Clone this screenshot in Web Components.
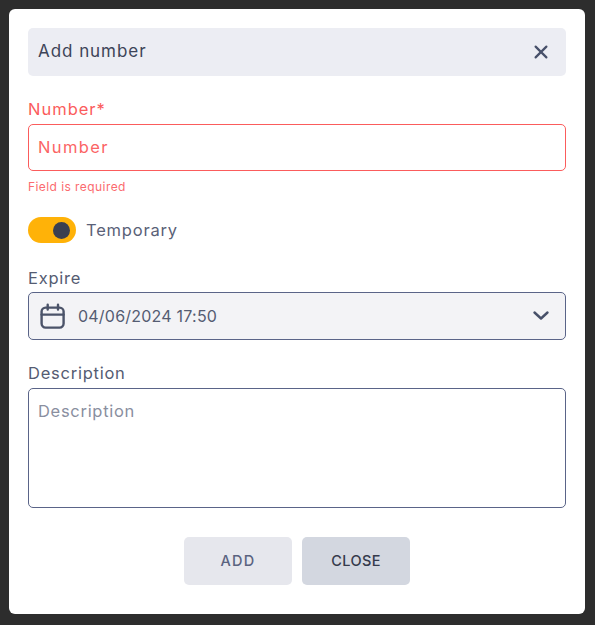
<!DOCTYPE html>
<html lang="en"><head><meta charset="utf-8"><title>Add number</title>
<style>
html,body{margin:0;height:625px;overflow:hidden;background:#2d2d2d}
body{padding:9px 10px 11px 9px;box-sizing:border-box;font-family:Inter,"Liberation Sans",sans-serif}
</style></head><body>
<add-number-dialog></add-number-dialog>
<template id="dlg"><style>
:host{display:flex;flex-direction:column;width:576px;height:605px;box-sizing:border-box;background:#fff;border-radius:6px;padding:19px 19px 29px}
.head{display:flex;align-items:center;justify-content:space-between;height:48px;background:#ecedf3;border-radius:5px;padding:0 16px 0 10px;box-sizing:border-box;color:#3d4458;font-size:17px;letter-spacing:.95px;flex:none}
.head span{padding-bottom:2px}
.head svg{display:block}
form-field.n{margin-top:23px}
.err{font-size:12px;line-height:16px;color:#fb6b6f;margin-top:8px;height:16px;letter-spacing:.43px}
toggle-row{margin-top:22px}
form-field.e{margin-top:25px;--gap:4px}
form-field.d{margin-top:23px}
.btns{display:flex;justify-content:center;gap:10px;margin-top:29px}
</style>
<div class="head"><span>Add number</span><svg width="18" height="18" viewBox="0 0 18 18" fill="none" stroke="#475069" stroke-width="2.2" stroke-linecap="round"><path d="M3.6 3.6 14.4 14.4M14.4 3.6 3.6 14.4"/></svg></div>
<form-field class="n" label="Number*" tone="error"><text-box tone="error" placeholder="Number"></text-box></form-field>
<div class="err">Field is required</div>
<toggle-row>Temporary</toggle-row>
<form-field class="e" label="Expire"><date-select>04/06/2024 17:50</date-select></form-field>
<form-field class="d" label="Description"><text-area placeholder="Description"></text-area></form-field>
<div class="btns"><action-button tone="light">ADD</action-button><action-button tone="dark">CLOSE</action-button></div>
</template>
<template id="field"><style>
:host{display:flex;flex-direction:column;gap:var(--gap,5px)}
label{font-size:16.5px;line-height:20px;height:20px;color:#555c72;letter-spacing:.75px}
:host([tone=error]) label{color:#fb5c5c;letter-spacing:1px}
</style><label></label><slot></slot></template>
<template id="tbox"><style>
:host{display:flex;align-items:center;height:47px;box-sizing:border-box;border:1px solid #fb5c5c;border-radius:5px;padding:0 9px 2px;color:#fb6464;font-size:16.5px;letter-spacing:1.4px}
</style><span></span></template>
<template id="tarea"><style>
:host{display:block;height:120px;box-sizing:border-box;border:1px solid #5a6488;border-radius:5px;padding:12px 9px;color:#8a8f9f;font-size:16.5px;line-height:20px;letter-spacing:.7px}
</style><span></span></template>
<template id="tog"><style>
:host{display:flex;align-items:center;gap:10px;height:26px;color:#5a6177;font-size:16.5px;letter-spacing:.8px}
.t{width:48px;height:26px;border-radius:13px;background:#ffb208;display:flex;align-items:center;justify-content:flex-end;padding-right:6px;box-sizing:border-box}
.k{width:17px;height:17px;border-radius:50%;background:#3a3f50}
</style><span class="t"><span class="k"></span></span><slot></slot></template>
<template id="sel"><style>
:host{display:flex;align-items:center;height:48px;box-sizing:border-box;background:#f3f3f6;border:1px solid #5a6488;border-radius:5px;padding:0 15px 0 10px;color:#555c72;font-size:16px;letter-spacing:.22px}
svg{display:block;flex:none}
.txt{flex:1;margin-left:12px}
</style><svg width="27" height="27" viewBox="0 0 27 27" fill="none" stroke="#4b5369" stroke-width="2.4" stroke-linecap="round" stroke-linejoin="round"><rect x="2.6" y="4.6" width="22" height="20" rx="4"/><path d="M2.6 11.6H24.6M8.7 1.8V6.6M19 1.8V6.6"/></svg><span class="txt"><slot></slot></span><svg width="18" height="18" viewBox="0 0 18 18" fill="none" stroke="#475069" stroke-width="2.4" stroke-linecap="round" stroke-linejoin="round"><path d="M2.5 5.5 9 11.5 15.5 5.5"/></svg></template>
<template id="btn"><style>
:host{display:flex;align-items:center;justify-content:center;width:108px;height:48px;box-sizing:border-box;padding-bottom:2px;border-radius:5px;font-size:14.5px;font-weight:500}
:host([tone=light]){background:#e6e7ed;color:#5a6380;letter-spacing:1.3px}
:host([tone=dark]){background:#d3d7e0;color:#353a4c;letter-spacing:.4px}
</style><slot></slot></template>
<script>
function def(name,tpl,init){customElements.define(name,class extends HTMLElement{constructor(){super();this.attachShadow({mode:'open'}).appendChild(document.getElementById(tpl).content.cloneNode(true));}connectedCallback(){if(init)init(this,this.shadowRoot);}});}
const ph=(h,s)=>{s.querySelector('span').textContent=h.getAttribute('placeholder');};
def('form-field','field',(h,s)=>{s.querySelector('label').textContent=h.getAttribute('label');});
def('text-box','tbox',ph);
def('text-area','tarea',ph);
def('toggle-row','tog');
def('date-select','sel');
def('action-button','btn');
def('add-number-dialog','dlg');
</script>
</body></html>
